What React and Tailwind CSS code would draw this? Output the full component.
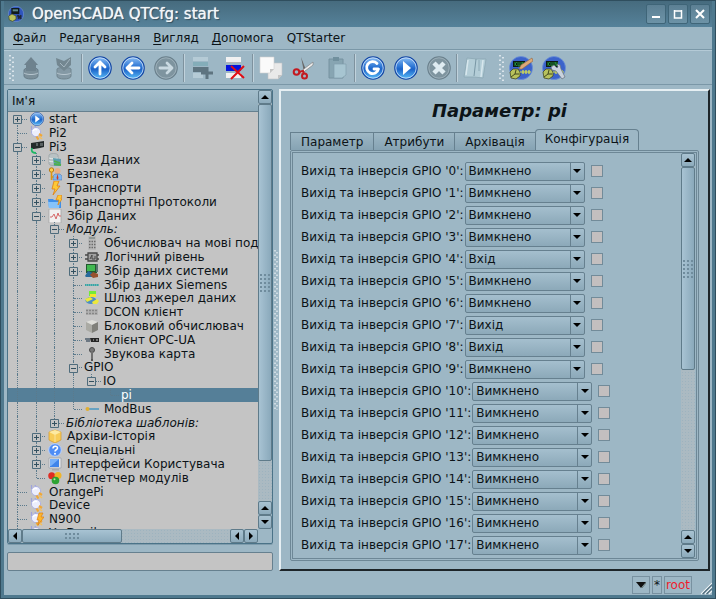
import { useState } from 'react'

function Orb({ children, className = 'size-3.5' }) {
  return (
    <svg viewBox="0 0 24 24" className={className}>
      <defs>
        <linearGradient id="orb" x1="0" y1="0" x2="0" y2="1">
          <stop offset="0" stopColor="#8fc0f4" />
          <stop offset="0.45" stopColor="#2a74d4" />
          <stop offset="0.55" stopColor="#1c63c8" />
          <stop offset="1" stopColor="#5cc0fa" />
        </linearGradient>
      </defs>
      <circle cx="12" cy="12" r="11.200" fill="url(#orb)" stroke="#1447a4" strokeWidth="1.200" />
      <circle cx="12" cy="12" r="10.200" fill="none" stroke="#d4e6fa" strokeWidth=".8" />
      {children}
    </svg>
  )
}

const Plug = () => (
  <>
    <path d="M1.500 0v4M5 0l1 2" stroke="#9ea3dc" strokeWidth="1.200" />
    <circle cx="6" cy="6" r="4.600" fill="#eceefc" stroke="#a9aee2" strokeWidth=".9" />
    <path d="M3 5c1-2 3-2 4-1" fill="none" stroke="#fff" strokeWidth="1.500" />
    <path d="M9 8l3 2M6.500 10.500l2 3" stroke="#f0a838" strokeWidth="2.200" />
    <path d="M9 10.500l3 2.500" stroke="#f6bf5a" strokeWidth="1.500" />
  </>
)

// tree node icons, all drawn on a 14x14 grid
const treeIcons = {
  plug: <Plug />,
  pi3: (
    <>
      <path d="M1 3l13-2v6l-4 1-6 1H1z" fill="#242a2b" />
      <path d="M6 3h2v3H6zM10 3h3v3h-3z" fill="#5a6263" />
      <path d="M2 8c-1 3 0 5 4 5" fill="none" stroke="#1fb765" strokeWidth="1.8" />
    </>
  ),
  db: (
    <>
      <path d="M1 2c1-2 8-2 9 0v9c-1 2-8 2-9 0z" fill="#b9c2c4" stroke="#8f999b" strokeWidth=".6" />
      <path d="M1 5c3 1 6 1 9 0M1 8c3 1 6 1 9 0" stroke="#e6eaea" fill="none" />
      <path d="M5 5l8 1v7H6z" fill="#5f9fb0" />
      <path d="M6 8l6 2M6 11l7 1" stroke="#4fb04c" strokeWidth="1.8" />
    </>
  ),
  security: (
    <>
      <circle cx="9.500" cy="4" r="3" fill="#e9b083" />
      <path d="M5 13V9l2-2h5l2 2v4z" fill="#7fb6ef" stroke="#4a72ad" strokeWidth=".5" />
      <path d="M9.500 7l-1 4 1 2 1-2z" fill="#d23b22" />
      <circle cx="3.500" cy="3" r="2.200" fill="#fbd04a" stroke="#b87911" />
      <path d="M3.500 5v8M3.500 10h2" stroke="#dc9512" strokeWidth="1.6" />
    </>
  ),
  bolt: <path d="M6 0h5L9 5h3l-7 9 2-6H4z" fill="#fdc936" stroke="#e07f12" strokeWidth=".8" />,
  folder: (
    <>
      <path d="M0 4h5l1 1h7v8H1z" fill="#3f8fe8" />
      <path d="M0 7h12l-1 6H1z" fill="#86c3fa" />
      <path d="M10 0h4l-1 4h1l-4 6 1-5H8z" fill="#fdc936" stroke="#e07f12" strokeWidth=".7" />
    </>
  ),
  chart: (
    <>
      <path d="M1 0h12v14H1z" fill="#f0f0f0" stroke="#a5a5a5" strokeWidth=".8" />
      <path d="M2 8h2l2-3 2 5 2-6 1 3h2" fill="none" stroke="#d66969" />
    </>
  ),
  calc: (
    <>
      <path d="M3 0h8v14H3z" fill="#b8b8b8" />
      <path d="M4 1h6v2H4z" fill="#8f9795" />
      <path d="M4 5.500h7M4 8.500h7M4 11.500h7" stroke="#6a6a6a" strokeWidth="1.600" strokeDasharray="1.500 1" />
    </>
  ),
  logic: (
    <>
      <path d="M3 3h9v8H3zM0 5h3M0 9h3M12 5h2M12 9h2" fill="#a1a1a1" stroke="#484848" strokeWidth="1.300" />
      <path d="M5 9l2-4v4h3V6" fill="none" stroke="#484848" />
    </>
  ),
  system: (
    <>
      <path d="M1 0h11v9H1z" fill="#23592f" />
      <path d="M2 1h8v6H2z" fill="#41b851" />
      <path d="M0 12l3-5 5 2v4H1z" fill="#276a9b" />
      <path d="M5 11l3-3 5 2v3l-5 1z" fill="#98512f" />
      <path d="M11 0h2v8h-2z" fill="#57756f" />
    </>
  ),
  siemens: <path d="M0 7h14" stroke="#35a6a6" strokeWidth="2" strokeDasharray="1.600 .4" />,
  gateway: (
    <>
      <path d="M4 0h7v5H4z" fill="#73ea38" />
      <path d="M5 3h6v3H5z" fill="#f3e72a" />
      <ellipse cx="6" cy="9.500" rx="5.500" ry="3.500" fill="#4d8ec3" />
      <path d="M0 8l5-2 3 2-6 3zM7 11l5-3 2 2-2 3H8z" fill="#ece83d" />
    </>
  ),
  dcon: (
    <>
      <path d="M1 4h12v6H1z" fill="#b2b2b2" />
      <path d="M1 5.500h12M1 8.500h12" stroke="#868686" strokeWidth="1.300" strokeDasharray="2 1" />
    </>
  ),
  block: (
    <>
      <path d="M1 3l6-2 6 2-6 3z" fill="#deded9" />
      <path d="M1 3l6 3v8l-6-3z" fill="#aaaaa4" />
      <path d="M13 3L7 6v8l6-3z" fill="#80807a" />
    </>
  ),
  opc: (
    <>
      <path d="M0 6h5M1 8h4" stroke="#4f5e6c" strokeWidth="1.500" />
      <path d="M5 5h9v4H6z" fill="#242424" />
      <path d="M8 7h1M11 7h2" stroke="#c4c4c4" />
    </>
  ),
  mic: (
    <>
      <circle cx="7" cy="3" r="2.500" fill="#777" stroke="#494949" />
      <path d="M7 5v9" stroke="#555" strokeWidth="2" />
      <path d="M7 5v7" stroke="#999" strokeWidth=".8" />
    </>
  ),
  modbus: (
    <>
      <path d="M2 7h12" stroke="#4897c2" strokeWidth="1.500" />
      <circle cx="2.500" cy="7" r="2" fill="#dfae32" />
    </>
  ),
  archive: (
    <>
      <path d="M1 3l6-2 6 2v8l-6 3-6-3z" fill="#f7cc58" stroke="#d59a28" strokeWidth=".7" />
      <path d="M1 3l6-2 6 2-6 3z" fill="#fdeaa2" />
      <path d="M7 6v7" stroke="#fae39b" />
    </>
  ),
  help: (
    <>
      <circle cx="7" cy="7" r="6.300" fill="#4f8df5" stroke="#b9d2fd" />
      <path d="M5 5.500c0-3 4.500-3 4.500-.5C9.500 7 7 6.500 7 8.500" fill="none" stroke="#fff" strokeWidth="1.500" />
      <circle cx="7" cy="10.800" r="1" fill="#fff" />
    </>
  ),
  monitor: (
    <>
      <path d="M1 1h12v10H1z" fill="#e7e9ec" stroke="#989fa8" strokeWidth=".7" />
      <path d="M2 2h9v8H2z" fill="#3f84ea" />
      <path d="M2 2h9L3 9H2z" fill="#76b0fa" />
      <path d="M4 12h7v1.500H4z" fill="#a8aaac" />
    </>
  ),
  modules: (
    <>
      <circle cx="3.700" cy="4.700" r="3.500" fill="#df2d23" />
      <circle cx="10" cy="4.500" r="3.500" fill="#efb42a" />
      <circle cx="7.500" cy="9.500" r="3.800" fill="#2da332" />
      <circle cx="6.500" cy="8.200" r="1" fill="#b3e8a4" />
    </>
  ),
  n900: (
    <>
      <Plug />
      <path d="M9 1h4l-2 4h3l-6 8 1-5H7z" fill="#fdb62c" stroke="#e07f12" strokeWidth=".7" />
    </>
  ),
}

const nodes = [
  { depth: 0, label: 'start', icon: 'start', box: '+' },
  { depth: 0, label: 'Pi2', icon: 'plug' },
  { depth: 0, label: 'Pi3', icon: 'pi3', box: '-' },
  { depth: 1, label: 'Бази Даних', icon: 'db', box: '+' },
  { depth: 1, label: 'Безпека', icon: 'security', box: '+' },
  { depth: 1, label: 'Транспорти', icon: 'bolt', box: '+' },
  { depth: 1, label: 'Транспортні Протоколи', icon: 'folder', box: '+' },
  { depth: 1, label: 'Збір Даних', icon: 'chart', box: '-' },
  { depth: 2, label: 'Модуль:', box: '-', italic: true },
  { depth: 3, label: 'Обчислювач на мові под', icon: 'calc', box: '+' },
  { depth: 3, label: 'Логічний рівень', icon: 'logic', box: '+' },
  { depth: 3, label: 'Збір даних системи', icon: 'system', box: '+' },
  { depth: 3, label: 'Збір даних Siemens', icon: 'siemens' },
  { depth: 3, label: 'Шлюз джерел даних', icon: 'gateway' },
  { depth: 3, label: 'DCON клієнт', icon: 'dcon' },
  { depth: 3, label: 'Блоковий обчислювач', icon: 'block' },
  { depth: 3, label: 'Клієнт OPC-UA', icon: 'opc' },
  { depth: 3, label: 'Звукова карта', icon: 'mic' },
  { depth: 3, label: 'GPIO', box: '-' },
  { depth: 4, label: 'IO', box: '-' },
  { depth: 5, label: 'pi' },
  { depth: 3, label: 'ModBus', icon: 'modbus' },
  { depth: 2, label: 'Бібліотека шаблонів:', box: '+', italic: true },
  { depth: 1, label: 'Архіви-Історія', icon: 'archive', box: '+' },
  { depth: 1, label: 'Спеціальні', icon: 'help', box: '+' },
  { depth: 1, label: 'Інтерфейси Користувача', icon: 'monitor', box: '+' },
  { depth: 1, label: 'Диспетчер модулів', icon: 'modules' },
  { depth: 0, label: 'OrangePi', icon: 'plug' },
  { depth: 0, label: 'Device', icon: 'plug' },
  { depth: 0, label: 'N900', icon: 'n900' },
  { depth: 0, label: 'Yu Devil', icon: 'plug' },
]

// does the branch line of this depth go on below row i?
const goesOn = (i, depth) => {
  for (let j = i + 1; j < nodes.length; j++) {
    if (nodes[j].depth === depth) return true
    if (nodes[j].depth < depth) return false
  }
  return depth === 0
}

function Guide({ index, depth }) {
  const node = nodes[index]
  const own = depth === node.depth
  const more = goesOn(index, depth)
  const first = index === 0
  return (
    <span className={`relative h-full shrink-0 ${depth % 2 ? 'w-[18px]' : 'w-[19px]'}`}>
      {own && !first && <span className="absolute left-[9px] top-0 h-1/2 border-l border-dotted border-[#5b7a8c]" />}
      {own && more && <span className="absolute left-[9px] top-1/2 bottom-0 border-l border-dotted border-[#5b7a8c]" />}
      {!own && more && <span className="absolute left-[9px] inset-y-0 border-l border-dotted border-[#5b7a8c]" />}
      {own && <span className="absolute left-[10px] right-0 top-1/2 border-t border-dotted border-[#5b7a8c]" />}
      {own && node.box && (
        <svg viewBox="0 0 9 9" className="absolute left-[5px] top-[3px] size-[9px]">
          <path d="M.5.500h8v8h-8z" fill="#c4c4c4" stroke="#4f6c7c" />
          <path d={node.box === '+' ? 'M2 4.500h5M4.500 2v5' : 'M2 4.500h5'} stroke="#33505f" />
        </svg>
      )}
    </span>
  )
}

function TreeRow({ index, selected, onSelect }) {
  const node = nodes[index]
  return (
    <button
      type="button"
      onClick={onSelect}
      className={`flex min-h-0 w-full items-center whitespace-nowrap text-left ${selected ? 'bg-[#557f98] text-white' : ''}`}
    >
      {Array.from({ length: node.depth + 1 }, (_, d) => <Guide key={d} index={index} depth={d} />)}
      {node.icon && (
        <span className="ml-[3px] mr-[3px] shrink-0">
          {node.icon === 'start'
            ? <Orb><path d="M9 6l8 6-8 6z" fill="#fff" /></Orb>
            : <svg viewBox="0 0 14 14" className="size-3.5">{treeIcons[node.icon]}</svg>}
        </span>
      )}
      <span className={`px-0.5 leading-[14px] ${node.italic ? 'italic' : ''}`}>{node.label}</span>
    </button>
  )
}

const arrows = {
  up: 'M0 6l4-4 4 4z',
  down: 'M0 2l4 4 4-4z',
  left: 'M6 0v8L2 4z',
  right: 'M2 0v8l4-4z',
}

function ArrowButton({ dir }) {
  return (
    <button type="button" aria-label={dir} className="flex size-3.5 shrink-0 items-center justify-center rounded-xs border border-[#5f7b8a] bg-linear-to-b from-[#a9c3d2] to-[#8dabbc]">
      <svg viewBox="0 0 8 8" className="size-2"><path d={arrows[dir]} fill="#000" /></svg>
    </button>
  )
}

const trackDots = 'bg-[#abbac2] bg-[radial-gradient(#9db3bf_1px,transparent_1px)] bg-[size:3px_3px]'

function Grip({ className }) {
  return <span className={`bg-[radial-gradient(#6f8c9d_1px,transparent_1px)] bg-[size:4px_4px] ${className}`} />
}

function VScroll({ thumb }) {
  return (
    <div className="flex w-3.5 shrink-0 flex-col">
      <ArrowButton dir="up" />
      <div className={`flex min-h-0 flex-1 flex-col ${trackDots}`}>
        <div className={`flex items-center justify-center rounded-xs border border-[#5f7b8a] bg-linear-to-r from-[#a8c3d3] to-[#8aa9bb] ${thumb}`}>
          <Grip className="h-5 w-3" />
        </div>
      </div>
      <ArrowButton dir="up" />
      <ArrowButton dir="down" />
    </div>
  )
}

function HScroll() {
  return (
    <div className="flex h-3.5 min-w-0 flex-1">
      <ArrowButton dir="left" />
      <div className={`flex min-w-0 flex-1 ${trackDots}`}>
        <div className="flex w-[48%] items-center justify-center rounded-xs border border-[#5f7b8a] bg-linear-to-b from-[#a8c3d3] to-[#8aa9bb]">
          <Grip className="h-2 w-4" />
        </div>
      </div>
      <ArrowButton dir="left" />
      <ArrowButton dir="right" />
    </div>
  )
}

function ToolButton({ label, children }) {
  return (
    <button type="button" aria-label={label} className="flex h-full w-[33px] shrink-0 items-center justify-center">
      {children}
    </button>
  )
}

const Separator = () => <span className="mx-px h-7 w-px shrink-0 bg-[#7e929e] shadow-[1px_0_0_#c0d2dc]" />

const Handle = () => (
  <svg viewBox="0 0 5 28" className="h-7 w-[5px] shrink-0">
    <path d="M1 1v27M4 3v25" stroke="#eef4f7" strokeWidth="1.500" strokeDasharray="1.500 3" />
  </svg>
)

const GreyOrb = ({ children }) => (
  <svg viewBox="0 0 24 24" className="size-6">
    <circle cx="12" cy="12" r="11.200" fill="#7e949f" stroke="#6b818d" strokeWidth="1.200" />
    <circle cx="12" cy="12" r="10.200" fill="none" stroke="#a3b6c0" strokeWidth=".8" />
    {children}
  </svg>
)

const Draw = ({ children }) => <svg viewBox="0 0 24 24" className="size-6">{children}</svg>

const arrowStroke = { fill: 'none', strokeWidth: 2.8, strokeLinecap: 'round', strokeLinejoin: 'round' }

const Scada = ({ children }) => (
  <>
    <circle cx="12" cy="12" r="11.500" fill="#3c63cb" stroke="#6a8fd8" strokeWidth=".8" />
    <path d="M4 5h12v6H4z" fill="#0c1a14" />
    <path d="M6 6v4M6 8l2-2M6 8l2 2M9 6v4h2V6M13 6v4M13 6l2 4V6" fill="none" stroke="#27a43c" strokeWidth=".8" />
    <path d="M1 16l3-3h5l2 3v4l-4 3-5-1z" fill="#b8c25c" stroke="#42491f" strokeWidth=".8" />
    <path d="M7 14l-1 4-4 3M6 18h4" fill="none" stroke="#42491f" />
    <path d="M11 16h11M14 14v4M17 14v4M20 14v4" stroke="#dce44a" strokeWidth="1.200" />
    {children}
  </>
)

function Toolbar() {
  return (
    <div className="flex h-[35px] shrink-0 items-center border-t border-[#b4cad6] border-b border-b-[#7a97a7] pl-[5px]">
      <Handle />
      <ToolButton label="Завантажити">
        <Draw>
          <path d="M5 14c0-3 14-3 14 0v6c0 4-14 4-14 0z" fill="#7b8f9a" stroke="#687d89" />
          <path d="M5 17c3 2 11 2 14 0" fill="none" stroke="#b8c7d0" />
          <path d="M12 1l7 8h-2v6H7V9H5z" fill="#6e828e" />
        </Draw>
      </ToolButton>
      <ToolButton label="Зберегти">
        <Draw>
          <path d="M5 13c0-2 14-2 14 0v7c0 4-14 4-14 0z" fill="#8499a5" stroke="#71858f" />
          <path d="M5 17c3 2 11 2 14 0" fill="none" stroke="#b8c7d0" />
          <path d="M4 2l8 3 7-4v8l-7 6-7-6z" fill="#738791" />
          <path d="M8 7l4 4 6-8" fill="none" stroke="#a5b6c0" />
        </Draw>
      </ToolButton>
      <Separator />
      <ToolButton label="Вгору"><Orb className="size-6"><path d="M12 18V6M7 11l5-5 5 5" stroke="#fff" {...arrowStroke} /></Orb></ToolButton>
      <ToolButton label="Назад"><Orb className="size-6"><path d="M18 12H6M11 7l-5 5 5 5" stroke="#fff" {...arrowStroke} /></Orb></ToolButton>
      <ToolButton label="Вперед"><GreyOrb><path d="M6 12h12M13 7l5 5-5 5" stroke="#c9d9e1" {...arrowStroke} /></GreyOrb></ToolButton>
      <Separator />
      <ToolButton label="Додати">
        <Draw>
          <path d="M3 1h15v4H3zM3 17h10v5H3z" fill="#b5cbd6" />
          <path d="M3 6h15v4H3z" fill="#84adb9" />
          <path d="M3 11h15v5H3z" fill="#5e7480" />
          <path d="M17 11v12M11 17h12" stroke="#5e7480" strokeWidth="3" />
        </Draw>
      </ToolButton>
      <ToolButton label="Видалити">
        <Draw>
          <path d="M3 1h15v5H3zM3 17h15v5H3z" fill="#f1f1f1" />
          <path d="M3 6h15v1H3z" fill="#b5b5b5" />
          <path d="M3 9h15v6H3z" fill="#0514dc" />
          <path d="M8 10l13 12M21 10L8 23" stroke="#e00e16" strokeWidth="2" />
        </Draw>
      </ToolButton>
      <Separator />
      <ToolButton label="Копіювати">
        <Draw>
          <path d="M9 7h14v12l-4 4H9z" fill="#e9e9e9" stroke="#c0c4c6" strokeWidth=".6" />
          <path d="M1 1h14v12l-4 4H1z" fill="#fafafa" stroke="#d0d0d0" strokeWidth=".6" />
          <path d="M11 17l0-4 4 0zM19 23v-4h4z" fill="#c4c4c4" />
        </Draw>
      </ToolButton>
      <ToolButton label="Вирізати">
        <Draw>
          <path d="M9 1l5 13-2 2z" fill="#686868" />
          <path d="M21 6v3L9 18l-1-2z" fill="#eee" stroke="#777" strokeWidth=".6" />
          <circle cx="4.500" cy="16" r="2.800" fill="none" stroke="#c31920" strokeWidth="2" />
          <circle cx="12.500" cy="20" r="2.500" fill="none" stroke="#c31920" strokeWidth="2" />
          <path d="M7 16l4-1 1 3" fill="none" stroke="#c31920" strokeWidth="2" />
        </Draw>
      </ToolButton>
      <ToolButton label="Вставити">
        <Draw>
          <path d="M4 3h14v19H4z" fill="#87a5b2" stroke="#7792a0" />
          <path d="M8 1h6v4H8z" fill="#71909e" />
          <path d="M9 8h12v11l-4 3H9z" fill="#a7c5d1" stroke="#819fac" strokeWidth=".7" />
        </Draw>
      </ToolButton>
      <Separator />
      <ToolButton label="Оновити"><Orb className="size-6"><path d="M16 7.500A6 6 0 1 0 17.500 13H13" stroke="#fff" {...arrowStroke} /></Orb></ToolButton>
      <ToolButton label="Запустити"><Orb className="size-6"><path d="M9 5l8 7-8 7z" fill="#fff" /></Orb></ToolButton>
      <ToolButton label="Зупинити"><GreyOrb><path d="M7 7l10 10M17 7L7 17" stroke="#deebf1" strokeWidth="4.500" /></GreyOrb></ToolButton>
      <Separator />
      <ToolButton label="Довідка">
        <Draw>
          <path d="M4 2l10 1 9 0-3 19-9-1-10 0z" fill="#b3cdd7" stroke="#8ca7b4" strokeWidth=".8" />
          <path d="M5 4l-2 15M20 4l-2 17" fill="none" stroke="#d7e7ed" strokeWidth="1.500" />
          <path d="M13 3l-2 17" stroke="#7896a4" />
          <path d="M16 4v11" stroke="#8aa8b5" />
        </Draw>
      </ToolButton>
      <span className="w-2 shrink-0" />
      <Handle />
      <ToolButton label="QTCfg">
        <Draw><Scada><path d="M10 13l2-4L23 2l1 3-11 8z" fill="#dda978" stroke="#946642" strokeWidth=".6" /></Scada></Draw>
      </ToolButton>
      <ToolButton label="Vision">
        <Draw>
          <Scada><path d="M9 11l3-2 3 3 1-1-1-3 3 1 1 4 4 8-3 2-6-8-4-1z" fill="#c9d2dd" stroke="#65707e" strokeWidth=".7" /></Scada>
        </Draw>
      </ToolButton>
    </div>
  )
}

function TitleBar() {
  const btn = 'flex size-5 items-center justify-center rounded-xs border border-[#3f6578] bg-linear-to-b from-[#5c8094] to-[#6d93a7]'
  return (
    <header className="flex h-[27px] shrink-0 items-center border-t border-[#2c4756] bg-linear-to-b from-[#466b7e] to-[#56829a] pl-1 pr-0.5">
      <svg viewBox="0 0 24 24" className="size-4 shrink-0">
        <circle cx="12" cy="12" r="11.500" fill="#2f55bd" stroke="#7ea0dc" strokeWidth=".8" />
        <path d="M5 3h12v9H5z" fill="#101a1c" />
        <path d="M7 5h8v3H7z" fill="#5f8a8a" />
        <path d="M1 15l5-3 6 3v5l-5 3-5-2z" fill="#b8c25c" stroke="#42491f" />
        <path d="M14 14l6 5M20 14l-5 5" stroke="#20283a" strokeWidth="3" />
      </svg>
      <h1 className="ml-2 flex-1 truncate text-[15px] text-[#f2f6f8] [text-shadow:0_0_1px_#f2f6f8,1px_1px_1px_#27404d]">OpenSCADA QTCfg: start</h1>
      <div className="flex gap-0.5">
        <button type="button" aria-label="Згорнути" className={btn}><svg viewBox="0 0 10 10" className="size-2.5"><path d="M1 8h8" stroke="#fff" strokeWidth="2" /></svg></button>
        <button type="button" aria-label="Розгорнути" className={btn}><svg viewBox="0 0 10 10" className="size-2.5"><path d="M1 2h8M1.500 1v8h7V1" fill="none" stroke="#fff" strokeWidth="1.500" /></svg></button>
        <button type="button" aria-label="Закрити" className={btn}><svg viewBox="0 0 10 10" className="size-2.5"><path d="M1 1l8 8M9 1L1 9" stroke="#fff" strokeWidth="2" /></svg></button>
      </div>
    </header>
  )
}

const menus = [
  { key: 'Ф', rest: 'айл' },
  { key: '', rest: 'Редагування' },
  { key: 'В', rest: 'игляд' },
  { key: 'Д', rest: 'опомога' },
  { key: '', rest: 'QTStarter' },
]

const tabs = ['Параметр', 'Атрибути', 'Архівація', 'Конфігурація']
const modes = ['Вимкнено', 'Вхід', 'Вихід']
const gpio = [0, 0, 0, 0, 1, 0, 0, 2, 2, 0, 0, 0, 0, 0, 0, 0, 0, 0]

function GpioRow({ pin, mode, onMode }) {
  return (
    <div className="flex h-[22px] items-center">
      <label htmlFor={`pin${pin}`} className="mr-px whitespace-nowrap">Вихід та інверсія GPIO '{pin}':</label>
      <span className="relative flex">
        <select
          id={`pin${pin}`}
          value={mode}
          onChange={e => onMode(Number(e.target.value))}
          className="h-[19px] w-[120px] appearance-none rounded-xs border border-[#66808f] bg-linear-to-b from-[#a5bfce] to-[#8ca9b9] pl-[3px] pr-4 text-[12px] leading-4"
        >
          {modes.map((m, i) => <option key={m} value={i}>{m}</option>)}
        </select>
        <span className="pointer-events-none absolute inset-y-px right-px flex w-3.5 items-center justify-center border-l border-[#66808f]">
          <svg viewBox="0 0 8 8" className="size-2"><path d={arrows.down} /></svg>
        </span>
      </span>
      <input type="checkbox" aria-label={`Інверсія ${pin}`} className="ml-1.5 size-3 appearance-none border border-[#728b99] bg-[#c3bfbf] checked:bg-[#557f98]" />
    </div>
  )
}

export default function App() {
  const [selected, setSelected] = useState(20)
  const [tab, setTab] = useState(3)
  const [pins, setPins] = useState(gpio)

  const setMode = (pin, mode) => setPins(pins.map((m, i) => (i === pin ? mode : m)))

  return (
    <div className="flex h-screen flex-col border-x-4 border-b-4 border-[#4f798e] bg-[#9db7c5] font-['DejaVu_Sans',sans-serif] text-[12px] text-[#0c1317] outline-1 -outline-offset-1 outline-[#2f4e5e]">
      <TitleBar />
      <nav className="flex h-[23px] shrink-0 items-center gap-[13px] border-b border-[#7a97a7] pl-[9px]">
        {menus.map(m => (
          <button key={m.rest} type="button">
            {m.key && <span className="underline underline-offset-2">{m.key}</span>}{m.rest}
          </button>
        ))}
      </nav>
      <Toolbar />

      <div className="flex min-h-0 flex-1 pl-[3px] pr-0.5 pt-1">
        <aside className="flex w-[266px] shrink-0 flex-col">
          <div className="flex min-h-0 flex-1 flex-col rounded-xs border border-[#4b7388] shadow-[0_1px_0_#7f9cac]">
            <div className="flex min-h-0 flex-1">
              <div className="flex min-w-0 flex-1 flex-col bg-[#c4c4c4]">
                <div className="h-[22px] shrink-0 border-b border-[#66808f] bg-linear-to-b from-[#a3bdcb] to-[#8eabba] pl-1 leading-[22px]">Ім'я</div>
                <div className="min-h-0 flex-1 overflow-hidden">
                  <div className="grid h-[428px] auto-rows-fr">
                    {nodes.map((n, i) => (
                      <TreeRow key={i} index={i} selected={i === selected} onSelect={() => setSelected(i)} />
                    ))}
                  </div>
                </div>
              </div>
              <VScroll thumb="h-[90%]" />
            </div>
            <div className="flex">
              <HScroll />
              <span className="size-3.5 shrink-0" />
            </div>
          </div>
          <input aria-label="Пошук" className="mt-2 h-[19px] shrink-0 rounded-xs border border-[#66808f] bg-[#c4c4c4] px-1 outline-none" />
        </aside>

        <div className="flex w-1.5 shrink-0 items-center justify-center">
          <svg viewBox="0 0 4 160" className="h-40 w-1">
            <path d="M1 0v160M3 2v158" stroke="#eef4f7" strokeWidth="1.200" strokeDasharray="1.500 3" />
          </svg>
        </div>

        <main className="flex min-w-0 flex-1 flex-col border-2 border-l-[#e6eff3] border-t-[#e6eff3] border-b-[#1d2529] border-r-[#1d2529] px-[9px] pb-2">
          <h2 className="pb-1 pl-2.5 pt-2 text-center text-[18px] font-bold italic leading-6">Параметр: pi</h2>
          <div className="flex shrink-0 items-end pt-0.5">
            {tabs.map((t, i) => (
              <button
                key={t}
                type="button"
                onClick={() => setTab(i)}
                className={i === tab
                  ? 'h-[21px] rounded-t-sm border border-b-0 border-[#66808f] px-[9px] pb-0.5'
                  : 'h-[18px] border border-b-0 border-r-0 border-[#66808f] bg-linear-to-b from-[#9db7c5] to-[#86a3b3] px-2.5 leading-4'}
              >
                {t}
              </button>
            ))}
          </div>
          <div className="flex min-h-0 flex-1 rounded-xs border-3 border-double border-[#6d8796] pr-px">
            <div className="min-w-0 flex-1 overflow-hidden pl-2 pt-[7px]">
              {pins.map((mode, pin) => (
                <GpioRow key={pin} pin={pin} mode={mode} onMode={m => setMode(pin, m)} />
              ))}
            </div>
            <VScroll thumb="h-[56%]" />
          </div>
        </main>
      </div>

      <footer className="flex h-6 shrink-0 items-center justify-end gap-0.5 pt-1">
        <button type="button" aria-label="Стан" className="flex h-[18px] w-[18px] items-center justify-center border border-[#7891a0]">
          <svg viewBox="0 0 10 8" className="h-2 w-2.5"><path d="M0 1h10L5 7z" fill="#111" /><path d="M6 7l4-5" stroke="#687a75" /></svg>
        </button>
        <span className="h-[18px] w-2.5 border border-[#7891a0] text-center leading-4">*</span>
        <button type="button" className="h-[18px] border border-[#7891a0] px-px leading-4 text-[#f01c2c]">root</button>
        <svg viewBox="0 0 18 18" className="ml-1 h-4 w-3.5 self-end">
          <path d="M4 18L18 4M9 18l9-9M14 18l4-4" stroke="#eef4f7" strokeWidth="1.500" />
          <path d="M6 18L18 6M11 18l7-7" stroke="#4e6c7c" strokeWidth="1.500" />
        </svg>
      </footer>
    </div>
  )
}
